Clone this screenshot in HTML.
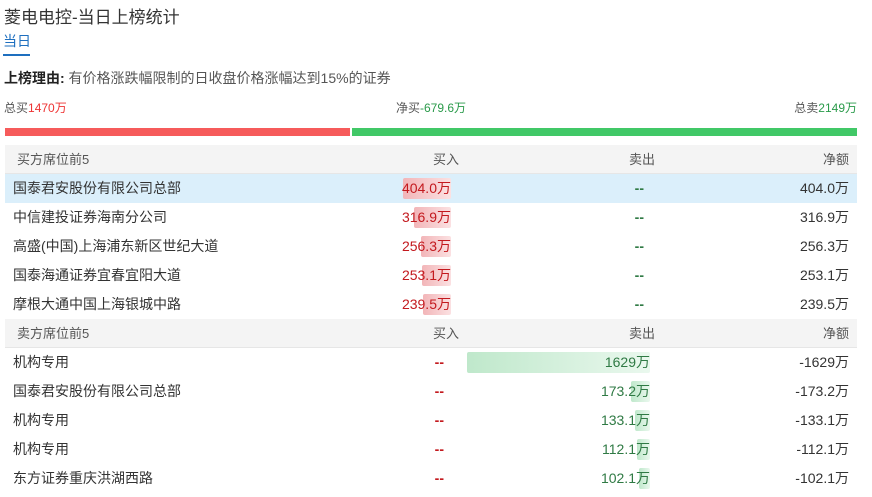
<!DOCTYPE html>
<html><head><meta charset="utf-8"><style>
body{margin:0;width:872px;height:497px;background:#fff;font-family:"Liberation Sans","Noto Sans CJK SC",sans-serif;color:#333;position:relative;overflow:hidden}
.a{position:absolute;white-space:nowrap}
.t{left:4px;top:3px;font-size:17px;color:#333}
.tab{left:3px;top:31px;font-size:14px;color:#1e6fbf;border-bottom:2px solid #1e6fbf;padding-bottom:3px;width:27px}
.reason{left:4px;top:68px;font-size:14px;color:#555}
.reason b{color:#222}
.s{font-size:12px;top:99px;color:#555}
.r{color:#e33}.g{color:#2a9a4a}
.tbl{position:absolute;left:5px;width:852px;top:145px}
.row{height:29px;position:relative;font-size:14px;line-height:29px}
.hd{background:#f4f4f4;color:#555;border-bottom:1px solid #e6e6e6;height:28px;font-size:13px}
.sel{background:#dbeffb}
.c{position:absolute;top:0}
.n{left:8px}
.b{right:406px;text-align:right}
.se{right:207px;text-align:right}
.ne{right:8px;text-align:right}
.hd .n{left:12px}
.bar{position:absolute;top:4px;height:21px;border-radius:2px}
.rb{right:406px;background:linear-gradient(90deg,#f2b5b8,#fbe1e2)}
.gb{right:207px;background:linear-gradient(90deg,#bfe8cb,#eaf8ee)}
.red{color:#c3191e}.grn{color:#2f7a44}
.dr{color:#c3191e;right:413px;font-weight:bold}
.dg{color:#2f7a44;right:213px;font-weight:bold}
</style></head><body>
<div class="a t">菱电电控-当日上榜统计</div>
<div class="a tab">当日</div>
<div class="a reason"><b>上榜理由:</b> 有价格涨跌幅限制的日收盘价格涨幅达到15%的证券</div>
<div class="a s" style="left:4px">总买<span class="r">1470万</span></div>
<div class="a s" style="left:396px">净买<span class="g">-679.6万</span></div>
<div class="a s" style="right:15px">总卖<span class="g">2149万</span></div>
<div class="a" style="left:5px;top:128px;width:345px;height:8px;background:#f65b5b"></div>
<div class="a" style="left:352px;top:128px;width:505px;height:8px;background:#41c867"></div>
<div class="tbl">
<div class="row hd"><span class="c n">买方席位前5</span><span class="c b" style="right:398px">买入</span><span class="c se" style="right:202px">卖出</span><span class="c ne">净额</span></div>
<div class="row sel"><div class="bar rb" style="width:48px"></div><span class="c n">国泰君安股份有限公司总部</span><span class="c b red">404.0万</span><span class="c dg">--</span><span class="c ne">404.0万</span></div>
<div class="row"><div class="bar rb" style="width:37px"></div><span class="c n">中信建投证券海南分公司</span><span class="c b red">316.9万</span><span class="c dg">--</span><span class="c ne">316.9万</span></div>
<div class="row"><div class="bar rb" style="width:30px"></div><span class="c n">高盛(中国)上海浦东新区世纪大道</span><span class="c b red">256.3万</span><span class="c dg">--</span><span class="c ne">256.3万</span></div>
<div class="row"><div class="bar rb" style="width:29px"></div><span class="c n">国泰海通证券宜春宜阳大道</span><span class="c b red">253.1万</span><span class="c dg">--</span><span class="c ne">253.1万</span></div>
<div class="row"><div class="bar rb" style="width:28px"></div><span class="c n">摩根大通中国上海银城中路</span><span class="c b red">239.5万</span><span class="c dg">--</span><span class="c ne">239.5万</span></div>
<div class="row hd"><span class="c n">卖方席位前5</span><span class="c b" style="right:398px">买入</span><span class="c se" style="right:202px">卖出</span><span class="c ne">净额</span></div>
<div class="row"><div class="bar gb" style="width:183px"></div><span class="c n">机构专用</span><span class="c dr">--</span><span class="c se grn">1629万</span><span class="c ne">-1629万</span></div>
<div class="row"><div class="bar gb" style="width:19px"></div><span class="c n">国泰君安股份有限公司总部</span><span class="c dr">--</span><span class="c se grn">173.2万</span><span class="c ne">-173.2万</span></div>
<div class="row"><div class="bar gb" style="width:15px"></div><span class="c n">机构专用</span><span class="c dr">--</span><span class="c se grn">133.1万</span><span class="c ne">-133.1万</span></div>
<div class="row"><div class="bar gb" style="width:13px"></div><span class="c n">机构专用</span><span class="c dr">--</span><span class="c se grn">112.1万</span><span class="c ne">-112.1万</span></div>
<div class="row"><div class="bar gb" style="width:11px"></div><span class="c n">东方证券重庆洪湖西路</span><span class="c dr">--</span><span class="c se grn">102.1万</span><span class="c ne">-102.1万</span></div>
</div>
</body></html>
